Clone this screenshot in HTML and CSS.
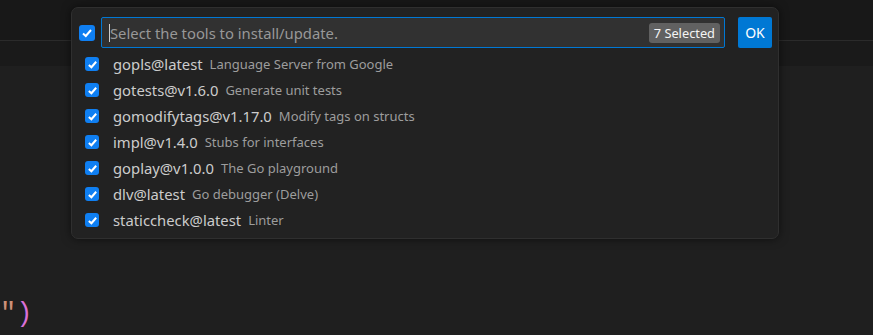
FILE: index.html
```html
<!DOCTYPE html>
<html>
<head>
<title>Install/Update Tools</title>
<link rel="stylesheet" href="styles.css">
</head>
<body>

<div class="tabBar"></div>
<div class="breadcrumbBar"></div>
<div class="editor">
    <div class="codeLine"><span class="str">"</span><span class="paren">)</span></div>
</div>

<div class="quickPick">
    <div class="header">
        <div class="check bigCheck">
            <svg width="12" height="12" viewBox="0 0 12 12"><polyline points="2,6.5 4.8,9 10,3" fill="none" stroke="#fff" stroke-width="2"/></svg>
        </div>
        <div class="inputBox">
            <div class="caret"></div>
            <div class="placeholder">Select the tools to install/update.</div>
            <div class="badge">7 Selected</div>
        </div>
        <button class="okBtn">OK</button>
    </div>

    <div class="list">
        <div class="row">
            <div class="check"><svg width="11" height="11" viewBox="0 0 12 12"><polyline points="2,6.5 4.8,9 10,3" fill="none" stroke="#fff" stroke-width="2.2"/></svg></div>
            <span class="rowLabel">gopls@latest</span><span class="rowDesc">Language Server from Google</span>
        </div>
        <div class="row">
            <div class="check"><svg width="11" height="11" viewBox="0 0 12 12"><polyline points="2,6.5 4.8,9 10,3" fill="none" stroke="#fff" stroke-width="2.2"/></svg></div>
            <span class="rowLabel">gotests@v1.6.0</span><span class="rowDesc">Generate unit tests</span>
        </div>
        <div class="row">
            <div class="check"><svg width="11" height="11" viewBox="0 0 12 12"><polyline points="2,6.5 4.8,9 10,3" fill="none" stroke="#fff" stroke-width="2.2"/></svg></div>
            <span class="rowLabel">gomodifytags@v1.17.0</span><span class="rowDesc">Modify tags on structs</span>
        </div>
        <div class="row">
            <div class="check"><svg width="11" height="11" viewBox="0 0 12 12"><polyline points="2,6.5 4.8,9 10,3" fill="none" stroke="#fff" stroke-width="2.2"/></svg></div>
            <span class="rowLabel">impl@v1.4.0</span><span class="rowDesc">Stubs for interfaces</span>
        </div>
        <div class="row">
            <div class="check"><svg width="11" height="11" viewBox="0 0 12 12"><polyline points="2,6.5 4.8,9 10,3" fill="none" stroke="#fff" stroke-width="2.2"/></svg></div>
            <span class="rowLabel">goplay@v1.0.0</span><span class="rowDesc">The Go playground</span>
        </div>
        <div class="row">
            <div class="check"><svg width="11" height="11" viewBox="0 0 12 12"><polyline points="2,6.5 4.8,9 10,3" fill="none" stroke="#fff" stroke-width="2.2"/></svg></div>
            <span class="rowLabel">dlv@latest</span><span class="rowDesc">Go debugger (Delve)</span>
        </div>
        <div class="row">
            <div class="check"><svg width="11" height="11" viewBox="0 0 12 12"><polyline points="2,6.5 4.8,9 10,3" fill="none" stroke="#fff" stroke-width="2.2"/></svg></div>
            <span class="rowLabel">staticcheck@latest</span><span class="rowDesc">Linter</span>
        </div>
    </div>
</div>

</body>
</html>
```

FILE: styles.css
```css
body{
    margin:0;
    background:#1f1f1f;
    font-family:"Noto Sans", sans-serif;
    height:335px;
    overflow:hidden;
    position:relative;
}
.tabBar{
    height:40px;
    background:#181818;
    border-bottom:1px solid #2b2b2b;
}
.breadcrumbBar{
    height:25px;
    background:#1a1a1a;
}
.editor{
    padding-top:232px;
}
.codeLine{
    font-family:"Liberation Mono", monospace;
    font-size:27px;
    line-height:32px;
    padding-left:0;
}
.str{
    color:#ce9178;
}
.paren{
    color:#da70d6;
}
.quickPick{
    position:absolute;
    left:71px;
    top:7px;
    width:708px;
    height:232px;
    box-sizing:border-box;
    background:#222222;
    border:1px solid #2f2f2f;
    border-radius:7px;
    box-shadow:0 0 10px rgba(0,0,0,0.55);
    padding:9px 6px 0 7px;
}
.header{
    display:flex;
    align-items:center;
    height:31px;
}
.check{
    width:14px;
    height:14px;
    border-radius:3px;
    background:#0f7ff2;
    display:flex;
    align-items:center;
    justify-content:center;
    flex-shrink:0;
}
.bigCheck{
    width:16px;
    height:16px;
    margin-right:6px;
}
.inputBox{
    flex:1;
    height:31px;
    box-sizing:border-box;
    background:#313131;
    border:1px solid #0078d4;
    border-radius:2px;
    display:flex;
    align-items:center;
    padding:0 4px 0 7px;
}
.caret{
    width:1px;
    height:18px;
    background:#cccccc;
}
.placeholder{
    flex:1;
    color:#989898;
    font-size:14.8px;
}
.badge{
    background:#616161;
    color:#f4f4f4;
    font-size:12.8px;
    padding:2px 5px;
    border-radius:3px;
    line-height:16px;
}
.okBtn{
    margin-left:13px;
    width:34px;
    height:31px;
    border:none;
    border-radius:2px;
    background:#0078d4;
    color:#ffffff;
    font-family:"Noto Sans", sans-serif;
    font-size:14px;
    padding:0;
}
.list{
    margin-top:3px;
}
.row{
    height:26px;
    display:flex;
    align-items:center;
    padding-left:6px;
}
.rowLabel{
    color:#cccccc;
    font-size:14.8px;
    margin-left:14px;
}
.rowDesc{
    color:#9d9d9d;
    font-size:13px;
    margin-left:7px;
}
```
